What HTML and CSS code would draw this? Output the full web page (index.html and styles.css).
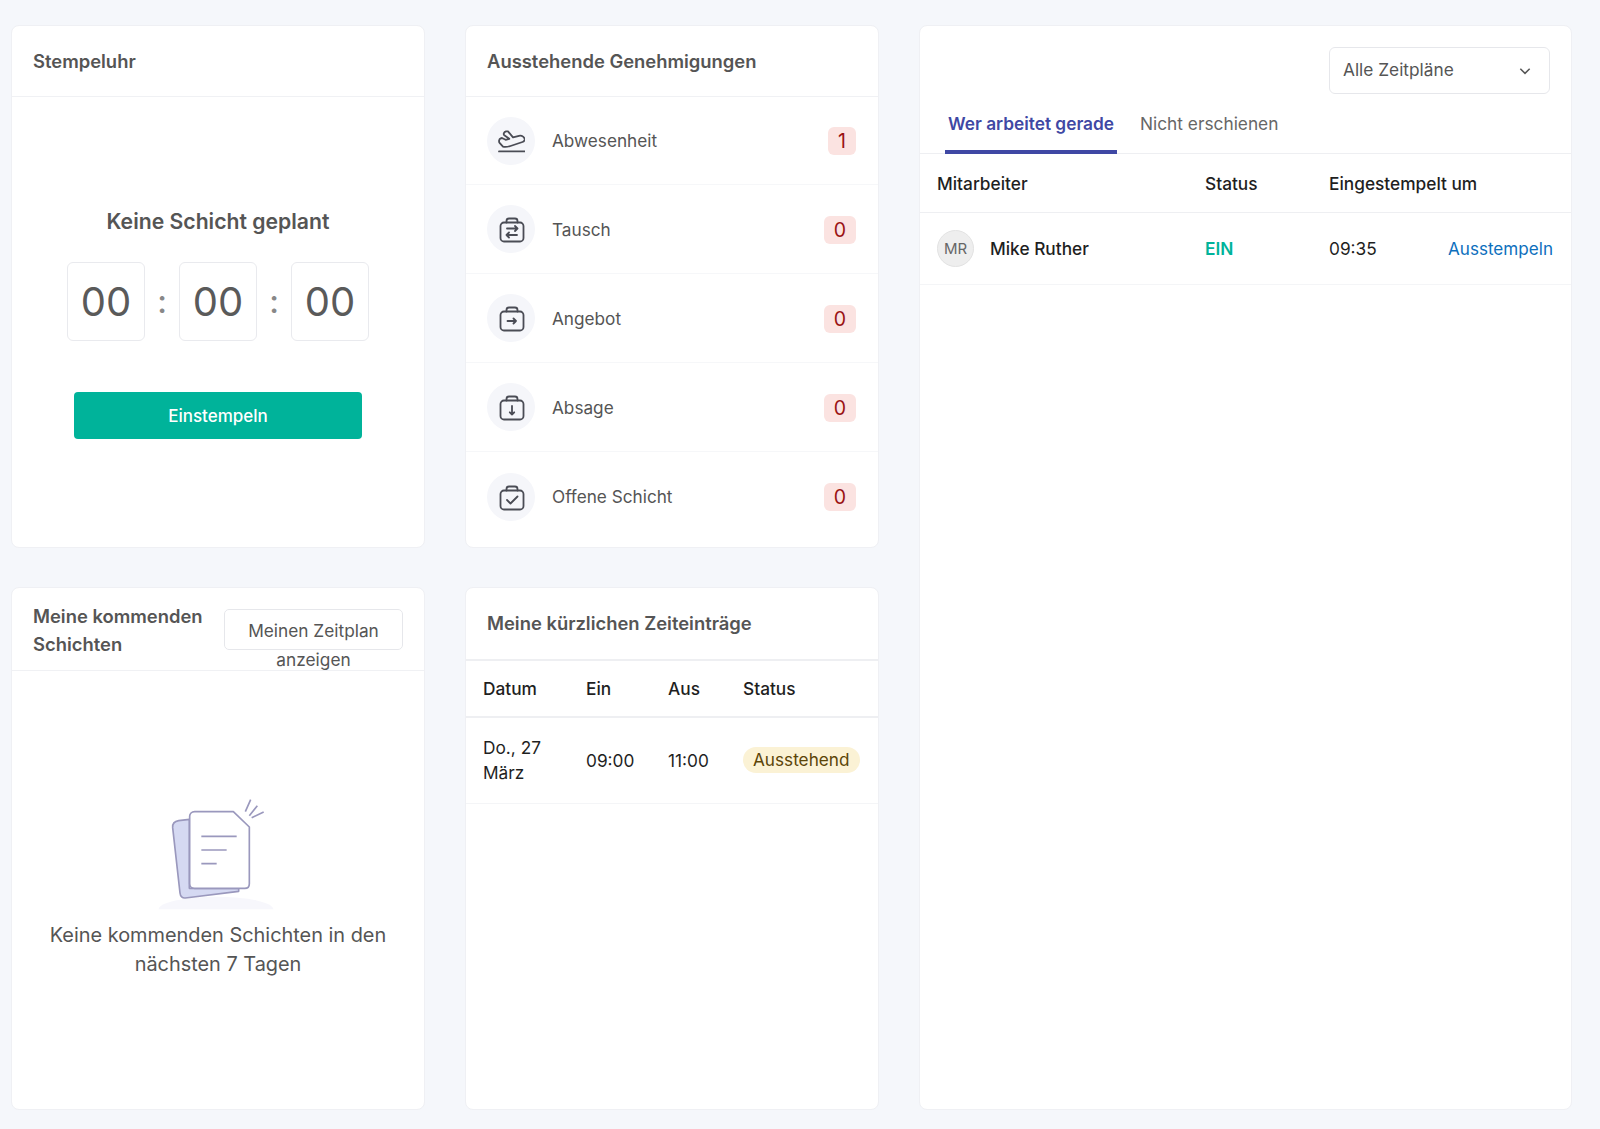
FILE: index.html
```html
<!DOCTYPE html>
<html lang="de">
<head>
  <meta charset="UTF-8">
  <title>Dashboard</title>
  <link rel="stylesheet" href="styles.css">
</head>
<body>
  <div class="dash">
    <section class="card clock-card">
      <h2 class="card-title">Stempeluhr</h2>
      <div class="clock">
        <h3 class="clock-title">Keine Schicht geplant</h3>
        <div class="timer">
          <span class="digit">00</span><span class="colon">:</span>
          <span class="digit">00</span><span class="colon">:</span>
          <span class="digit">00</span>
        </div>
        <button class="primary">Einstempeln</button>
      </div>
    </section>

    <section class="card approvals">
      <h2 class="card-title">Ausstehende Genehmigungen</h2>
      <div class="row">
        <span class="round">
          <svg viewBox="0 0 28 28" class="ico"><path d="M2 24.400h26M6 19.700L2.800 16.200C1.500 14.800 2 12 3.700 11.300L5 11l3.600 1.800 3.700-1L7.300 8.300C6 7.200 7 5 9 4.400h2l5 6 6-1.600c3-.8 6 1.700 5.600 4.200-.2 1-1.100 1.700-2.100 2l-12 4c-2.500.8-5.500 1.200-7.500.7z"/></svg>
        </span>
        <span class="row-label">Abwesenheit</span>
        <span class="count one">1</span>
      </div>
      <div class="row">
        <span class="round">
          <svg viewBox="0 0 28 28" class="ico"><rect x="3.500" y="7.500" width="23" height="19" rx="3.500"/><path d="M9.500 7.500V6c0-1.400 1-2.500 2.500-2.500h6c1.500 0 2.500 1.100 2.500 2.500v1.500M10 13.500h10.500M18 11l2.500 2.500-2.500 2.500M20 20H9.500M12 17.500L9.500 20l2.500 2.500"/></svg>
        </span>
        <span class="row-label">Tausch</span>
        <span class="count">0</span>
      </div>
      <div class="row">
        <span class="round">
          <svg viewBox="0 0 28 28" class="ico"><rect x="3.500" y="7.500" width="23" height="19" rx="3.500"/><path d="M9.500 7.500V6c0-1.400 1-2.500 2.500-2.500h6c1.500 0 2.500 1.100 2.500 2.500v1.500M10.500 17h8.500M16.500 14.500l2.500 2.500-2.500 2.500"/></svg>
        </span>
        <span class="row-label">Angebot</span>
        <span class="count">0</span>
      </div>
      <div class="row">
        <span class="round">
          <svg viewBox="0 0 28 28" class="ico"><rect x="3.500" y="7.500" width="23" height="19" rx="3.500"/><path d="M9.500 7.500V6c0-1.400 1-2.500 2.500-2.500h6c1.500 0 2.500 1.100 2.500 2.500v1.500M15 13v8.500M12.800 19.300L15 21.500l2.200-2.200"/></svg>
        </span>
        <span class="row-label">Absage</span>
        <span class="count">0</span>
      </div>
      <div class="row">
        <span class="round">
          <svg viewBox="0 0 28 28" class="ico"><rect x="3.500" y="7.500" width="23" height="19" rx="3.500"/><path d="M9.500 7.500V6c0-1.400 1-2.500 2.500-2.500h6c1.500 0 2.500 1.100 2.500 2.500v1.500M10 17l3.500 3.500 7-7"/></svg>
        </span>
        <span class="row-label">Offene Schicht</span>
        <span class="count">0</span>
      </div>
    </section>

    <section class="card working">
      <div class="filter-bar">
        <div class="select">
          <span>Alle Zeitpläne</span>
          <svg viewBox="0 0 12 12" class="chev"><path d="M2 4l4 4 4-4"/></svg>
        </div>
      </div>
      <div class="tabs">
        <span class="tab active">Wer arbeitet gerade</span>
        <span class="tab">Nicht erschienen</span>
      </div>
      <table class="staff">
        <thead>
          <tr><th>Mitarbeiter</th><th>Status</th><th>Eingestempelt um</th><th></th></tr>
        </thead>
        <tbody>
          <tr>
            <td><div class="person"><span class="avatar">MR</span><span>Mike Ruther</span></div></td>
            <td class="in">EIN</td>
            <td>09:35</td>
            <td><a class="out">Ausstempeln</a></td>
          </tr>
        </tbody>
      </table>
    </section>

    <section class="card shifts">
      <div class="shifts-head">
        <h2 class="card-title-plain">Meine kommenden Schichten</h2>
        <button class="outline">Meinen Zeitplan anzeigen</button>
      </div>
      <div class="empty">
        <svg viewBox="-6 0 540 420" class="empty-pic">
          <ellipse cx="258" cy="385" rx="172" ry="38" fill="#f7f7fc"/>
          <rect x="0" y="385" width="528" height="35" fill="#fff"/>
          <path d="M178 115l-32 4c-12 2-19 9-18 21l22 196c1 10 7 16 16 15l160-20v-9H178z" fill="#d5d9f2" stroke="#9a98bd" stroke-width="5" stroke-linejoin="round"/>
          <path d="M194 92h116l48 46v170c0 8-5 14-14 14H194c-9 0-15-6-15-14V106c0-8 6-14 15-14z" fill="#fff" stroke="#9a98bd" stroke-width="5" stroke-linejoin="round"/>
          <path d="M214 166h106M214 207h76M214 248h46" stroke="#9a98bd" stroke-width="5" fill="none"/>
          <path d="M346 92l16-36M358 104l24-30M365 110l36-17" stroke="#9a98bd" stroke-width="5" fill="none"/>
        </svg>
        <p class="empty-text">Keine kommenden Schichten in den nächsten 7 Tagen</p>
      </div>
    </section>

    <section class="card entries">
      <h2 class="card-title">Meine kürzlichen Zeiteinträge</h2>
      <table class="times">
        <thead>
          <tr><th class="c-date">Datum</th><th class="c-in">Ein</th><th class="c-out">Aus</th><th>Status</th></tr>
        </thead>
        <tbody>
          <tr>
            <td>Do., 27 März</td>
            <td>09:00</td>
            <td>11:00</td>
            <td><span class="pill">Ausstehend</span></td>
          </tr>
        </tbody>
      </table>
    </section>
  </div>
</body>
</html>
```

FILE: styles.css
```css
*{box-sizing:border-box;}
body{margin:0;background:#f5f7fb;font-family:"Inter","Noto Sans",sans-serif;color:#555;}
h2,h3,p{margin:0;}

.dash{
    display:grid;
    grid-template-columns:414px 414px 653px;
    grid-template-rows:523px 523px;
    column-gap:40px;
    row-gap:39px;
    padding:25px 0 20px 11px;
}
.card{
    background:#fff;
    border:1px solid #eff0f4;
    border-radius:8px;
    overflow:hidden;
}
.working{grid-column:3;grid-row:1 / 3;}
.card-title{
    height:71px;
    padding:0 21px;
    border-bottom:1px solid #f0f1f4;
    font-size:18.400px;
    font-weight:600;
    line-height:70px;
    color:#555;
}
.entries .card-title{height:71px;line-height:71px;border-bottom:0;}

/* stempeluhr */
.clock{text-align:center;padding-top:109px;}
.clock-title{font-size:21.200px;font-weight:600;line-height:30px;color:#555;}
.timer{display:flex;justify-content:center;margin-top:26px;}
.digit{
    width:78px;
    height:79px;
    border:1px solid #e9eaee;
    border-radius:6px;
    font-size:40px;
    line-height:77px;
    font-weight:400;
    color:#5a5a5a;
}
.colon{width:34px;font-size:32px;line-height:79px;font-weight:500;color:#888;}
.primary{
    display:block;
    width:288px;
    height:47px;
    margin:51px auto 0;
    border:0;
    border-radius:4px;
    background:#00b39a;
    color:#fff;
    font:500 17px "Inter",sans-serif;
}

/* genehmigungen */
.row{
    display:flex;
    align-items:center;
    height:89px;
    padding:0 22px 0 21px;
    border-bottom:1px solid #f6f7f9;
}
.card-title + .row{height:88px;}
.row:last-child{border-bottom:0;}
.round{
    display:flex;
    align-items:center;
    justify-content:center;
    width:48px;
    height:48px;
    border-radius:50%;
    background:#f5f6fa;
}
.ico{width:28px;height:28px;fill:none;stroke:#4a4c55;stroke-width:1.800;stroke-linecap:round;stroke-linejoin:round;}
.row-label{flex:1;margin-left:17px;font-size:17.200px;color:#555;}
.count{
    min-width:32px;
    height:28px;
    margin-top:1px;
    border-radius:6px;
    background:#fbe3e1;
    color:#9a1313;
    font-size:19.500px;
    line-height:28px;
    text-align:center;
}
.count.one{min-width:28px;}

/* wer arbeitet gerade */
.filter-bar{display:flex;justify-content:flex-end;padding:21px 21px 0 0;}
.select{
    display:flex;
    align-items:center;
    justify-content:space-between;
    width:221px;
    height:47px;
    padding:0 17px 2px 13px;
    border:1px solid #e6e7eb;
    border-radius:6px;
    font-size:17.300px;
    color:#555;
}
.chev{width:14px;height:14px;fill:none;stroke:#555;stroke-width:1.300;margin-top:2px;}
.tabs{
    display:flex;
    height:54px;
    margin-top:6px;
    padding-left:25px;
    border-bottom:1px solid #eeeff2;
}
.tab{
    padding:0 3px;
    margin-right:20px;
    font-size:17.300px;
    line-height:48px;
    color:#666;
}
.tab.active{
    margin-bottom:-1px;
    border-bottom:4px solid #3f48a4;
    color:#3f48a4;
    font-weight:600;
}
.staff,.times{width:100%;border-collapse:collapse;table-layout:fixed;}
.staff th,.times th{text-align:left;font-weight:500;color:#1f1f1f;font-size:17.300px;padding:0;}
.staff th{padding-top:2px;}
.staff thead tr{height:58px;border-bottom:1px solid #eeeff2;}
.staff tbody tr{height:72px;border-bottom:1px solid #f4f5f7;}
.staff td,.times td{padding:0;font-size:17.300px;color:#1f1f1f;}
.staff th:nth-child(1){width:285px;padding-left:17px;}
.staff td:nth-child(1){padding-left:17px;}
.staff th:nth-child(2){width:124px;}
.staff th:nth-child(3){width:119px;white-space:nowrap;}
.staff td:nth-child(4){white-space:nowrap;}
.person{display:flex;align-items:center;font-weight:500;}
.avatar{
    width:37px;
    height:37px;
    margin-right:16px;
    border:1px solid #e2e2e2;
    border-radius:50%;
    background:#eee;
    color:#666;
    font-size:15px;
    font-weight:400;
    line-height:35px;
    text-align:center;
}
.staff .in{color:#00b39a;font-weight:600;}
.out{color:#0d6fbd;font-size:17.100px;}

/* kommende schichten */
.shifts-head{
    display:flex;
    align-items:flex-start;
    justify-content:space-between;
    height:83px;
    padding:14px 21px 0 21px;
    border-bottom:1px solid #f0f1f4;
}
.card-title-plain{width:180px;font-size:18.400px;font-weight:600;line-height:28px;color:#555;}
.outline{
    display:block;
    width:179px;
    height:41px;
    margin-top:7px;
    padding:6px 12px;
    background:#fff;
    border:1px solid #e6e7eb;
    border-radius:5px;
    font:400 17.300px/29px "Inter",sans-serif;
    color:#555;
    text-align:center;
}
.empty{text-align:center;padding-top:110px;}
.empty-pic{display:block;width:180px;height:140px;margin:0 auto;}
.empty-text{width:360px;margin:0 auto;font-size:19.900px;line-height:29px;color:#555;}

/* zeiteintraege */
.times{border-top:2px solid #eeeff2;}
.times thead tr{height:57px;border-bottom:2px solid #eeeff2;}
.times tbody tr{height:86px;border-bottom:1px solid #f4f5f7;}
.times th:first-child,.times td:first-child{padding-left:17px;}
.c-date{width:120px;}
.c-in{width:82px;}
.c-out{width:75px;}
.times td{line-height:25px;}
.times td:first-child{padding-right:30px;}
.pill{
    display:inline-block;
    height:26px;
    padding:0 10px;
    border-radius:13px;
    background:#fbf2d5;
    color:#5c4508;
    font-size:17.200px;
    line-height:26px;
}
```
